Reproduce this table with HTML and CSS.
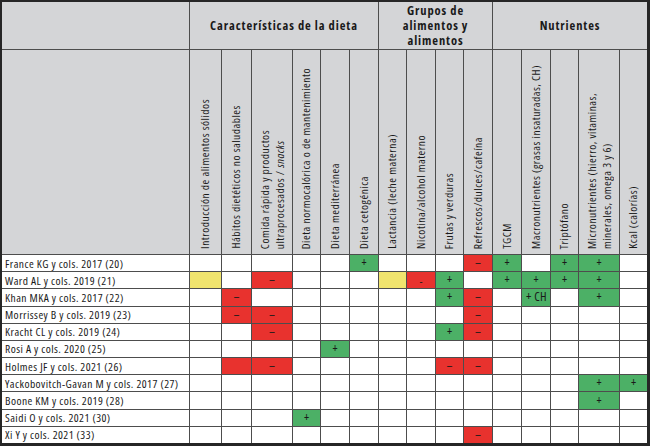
FILE: index.html
```html
<!DOCTYPE html>
<html lang="es">
<head>
<meta charset="utf-8">
<title>Tabla</title>
<link rel="stylesheet" href="styles.css">
</head>
<body>
<div class="grid">
  <div class="hd"></div>
  <div class="hd group span6">Características de la dieta</div>
  <div class="hd group span4">Grupos de<br>alimentos y<br>alimentos</div>
  <div class="hd group span5">Nutrientes</div>

  <div class="hd"></div>
  <div class="hd vert"><span>Introducción de alimentos sólidos</span></div>
  <div class="hd vert"><span>Hábitos dietéticos no saludables</span></div>
  <div class="hd vert"><span>Comida rápida y productos<br>ultraprocesados / <i>snacks</i></span></div>
  <div class="hd vert"><span>Dieta normocalórica o de mantenimiento</span></div>
  <div class="hd vert"><span>Dieta mediterránea</span></div>
  <div class="hd vert"><span>Dieta cetogénica</span></div>
  <div class="hd vert"><span>Lactancia (leche materna)</span></div>
  <div class="hd vert"><span>Nicotina/alcohol materno</span></div>
  <div class="hd vert"><span>Frutas y verduras</span></div>
  <div class="hd vert"><span>Refrescos/dulces/cafeína</span></div>
  <div class="hd vert"><span>TGCM</span></div>
  <div class="hd vert"><span>Macronutrientes (grasas insaturadas, CH)</span></div>
  <div class="hd vert"><span>Triptófano</span></div>
  <div class="hd vert"><span>Micronutrientes (hierro, vitaminas,<br>minerales, omega 3 y 6)</span></div>
  <div class="hd vert"><span>Kcal (calorías)</span></div>

  <!-- France -->
  <div class="name">France KG y cols. 2017 (20)</div>
  <div class="c"></div><div class="c"></div><div class="c"></div><div class="c"></div><div class="c"></div>
  <div class="c g">+</div><div class="c"></div><div class="c"></div><div class="c"></div>
  <div class="c r">–</div><div class="c g">+</div><div class="c"></div><div class="c g">+</div><div class="c g">+</div><div class="c"></div>

  <!-- Ward -->
  <div class="name">Ward AL y cols. 2019 (21)</div>
  <div class="c y"></div><div class="c"></div><div class="c r">–</div><div class="c"></div><div class="c"></div>
  <div class="c"></div><div class="c y"></div><div class="c r small">-</div><div class="c g">+</div>
  <div class="c"></div><div class="c g">+</div><div class="c g">+</div><div class="c g">+</div><div class="c g">+</div><div class="c"></div>

  <!-- Khan -->
  <div class="name">Khan MKA y cols. 2017 (22)</div>
  <div class="c"></div><div class="c r">–</div><div class="c"></div><div class="c"></div><div class="c"></div>
  <div class="c"></div><div class="c"></div><div class="c"></div><div class="c g">+</div>
  <div class="c r">–</div><div class="c"></div><div class="c g left">+ CH</div><div class="c"></div><div class="c g">+</div><div class="c"></div>

  <!-- Morrissey -->
  <div class="name">Morrissey B y cols. 2019 (23)</div>
  <div class="c"></div><div class="c r">–</div><div class="c r">–</div><div class="c"></div><div class="c"></div>
  <div class="c"></div><div class="c"></div><div class="c"></div><div class="c"></div>
  <div class="c r">–</div><div class="c"></div><div class="c"></div><div class="c"></div><div class="c"></div><div class="c"></div>

  <!-- Kracht -->
  <div class="name">Kracht CL y cols. 2019 (24)</div>
  <div class="c"></div><div class="c"></div><div class="c r">–</div><div class="c"></div><div class="c"></div>
  <div class="c"></div><div class="c"></div><div class="c"></div><div class="c g">+</div>
  <div class="c r">–</div><div class="c"></div><div class="c"></div><div class="c"></div><div class="c"></div><div class="c"></div>

  <!-- Rosi -->
  <div class="name">Rosi A y cols. 2020 (25)</div>
  <div class="c"></div><div class="c"></div><div class="c"></div><div class="c"></div><div class="c g">+</div>
  <div class="c"></div><div class="c"></div><div class="c"></div><div class="c"></div>
  <div class="c"></div><div class="c"></div><div class="c"></div><div class="c"></div><div class="c"></div><div class="c"></div>

  <!-- Holmes -->
  <div class="name">Holmes JF y cols. 2021 (26)</div>
  <div class="c"></div><div class="c r"></div><div class="c r">–</div><div class="c"></div><div class="c"></div>
  <div class="c"></div><div class="c"></div><div class="c"></div><div class="c r">–</div>
  <div class="c r">–</div><div class="c"></div><div class="c"></div><div class="c"></div><div class="c"></div><div class="c"></div>

  <!-- Yackobovitch -->
  <div class="name">Yackobovitch-Gavan M y cols. 2017 (27)</div>
  <div class="c"></div><div class="c"></div><div class="c"></div><div class="c"></div><div class="c"></div>
  <div class="c"></div><div class="c"></div><div class="c"></div><div class="c"></div>
  <div class="c"></div><div class="c"></div><div class="c"></div><div class="c"></div><div class="c g">+</div><div class="c g">+</div>

  <!-- Boone -->
  <div class="name">Boone KM y cols. 2019 (28)</div>
  <div class="c"></div><div class="c"></div><div class="c"></div><div class="c"></div><div class="c"></div>
  <div class="c"></div><div class="c"></div><div class="c"></div><div class="c"></div>
  <div class="c"></div><div class="c"></div><div class="c"></div><div class="c"></div><div class="c g">+</div><div class="c"></div>

  <!-- Saidi -->
  <div class="name">Saidi O y cols. 2021 (30)</div>
  <div class="c"></div><div class="c"></div><div class="c"></div><div class="c g">+</div><div class="c"></div>
  <div class="c"></div><div class="c"></div><div class="c"></div><div class="c"></div>
  <div class="c"></div><div class="c"></div><div class="c"></div><div class="c"></div><div class="c"></div><div class="c"></div>

  <!-- Xi -->
  <div class="name">Xi Y y cols. 2021 (33)</div>
  <div class="c"></div><div class="c"></div><div class="c"></div><div class="c"></div><div class="c"></div>
  <div class="c"></div><div class="c"></div><div class="c"></div><div class="c"></div>
  <div class="c r">–</div><div class="c"></div><div class="c"></div><div class="c"></div><div class="c"></div><div class="c"></div>
</div>
</body>
</html>
```

FILE: styles.css
```css
html, body {
  margin: 0;
  padding: 0;
  background: #ffffff;
}

.grid {
  box-sizing: border-box;
  width: 650px;
  height: 446px;
  display: grid;
  grid-template-columns: 187px 31px 29px 40px 27px 28px 28px 27px 28px 27px 28px 28px 28px 27px 40px 27px;
  grid-template-rows: 47px 204px repeat(11, minmax(0, 1fr));
  gap: 1px;
  background: #4d4d4d;
  border-top: 2px solid #262626;
  border-left: 2px solid #262626;
  border-right: 3px solid #262626;
  border-bottom: 3px solid #262626;
  font-family: "Open Sans", "Liberation Sans", sans-serif;
  font-stretch: 75%;
  font-weight: 400;
  color: #1a1a1a;
}

.grid > div {
  min-width: 0;
  min-height: 0;
  overflow: hidden;
}

.hd {
  background: #d4d5d7;
}

.grid > .group {
  display: flex;
  align-items: center;
  justify-content: center;
  text-align: center;
  font-weight: 700;
  font-size: 12.5px;
  line-height: 15px;
  letter-spacing: 0.9px;
  overflow: visible;
}

.span6 { grid-column: span 6; }
.span4 { grid-column: span 4; }
.span5 { grid-column: span 5; }

.vert {
  display: flex;
  justify-content: center;
  align-items: flex-end;
  padding-bottom: 5px;
  box-sizing: border-box;
}

.vert span {
  writing-mode: vertical-rl;
  transform: rotate(180deg);
  font-size: 11.5px;
  line-height: 14.5px;
  letter-spacing: 0.5px;
  white-space: nowrap;
}

.name {
  background: #ffffff;
  font-size: 11.5px;
  letter-spacing: 0.45px;
  display: flex;
  align-items: center;
  padding-left: 3px;
  white-space: nowrap;
}

.c {
  background: #ffffff;
  display: flex;
  align-items: center;
  justify-content: center;
  font-size: 12px;
  line-height: 1;
  white-space: nowrap;
}

.c.left {
  justify-content: flex-start;
  padding-left: 4px;
  font-size: 12.5px;
  letter-spacing: 0.3px;
}

.g { background: #4cb066; }
.r { background: #e8322e; }
.y { background: #f0e46e; }
.small { font-size: 11px; }
```
